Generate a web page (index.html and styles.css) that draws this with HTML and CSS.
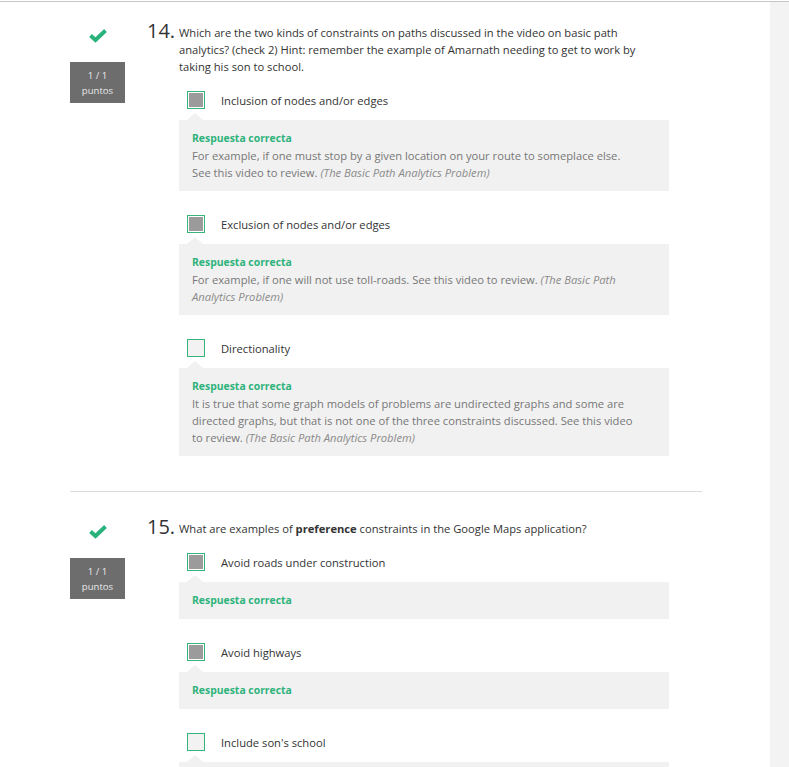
FILE: index.html
```html
<!DOCTYPE html>
<html lang="es">
<head>
<meta charset="utf-8">
<title>Quiz</title>
<link rel="stylesheet" href="styles.css">
</head>
<body>
<div class="page">
  <main class="main">
    <section class="question">
      <div class="gutter">
        <svg class="check" width="20" height="15" viewBox="0 0 20 15"><path d="M2.5 7.5 L7.5 12 L17.5 2.5" fill="none" stroke="#2ab27b" stroke-width="4" stroke-linecap="butt" stroke-linejoin="miter"/></svg>
        <div class="score"><span>1 / 1</span><span>puntos</span></div>
      </div>
      <div class="qbody">
        <div class="prompt"><span class="num">14.</span><p>Which are the two kinds of constraints on paths discussed in the video on basic path analytics? (check 2) Hint: remember the example of Amarnath needing to get to work by taking his son to school.</p></div>
        <ul class="options">
          <li class="option">
            <div class="choice"><span class="box checked"></span><span class="text">Inclusion of nodes and/or edges</span></div>
            <div class="feedback"><div class="label">Respuesta correcta</div><p>For example, if one must stop by a given location on your route to someplace else. See this video to review. <em>(The Basic Path Analytics Problem)</em></p></div>
          </li>
          <li class="option">
            <div class="choice"><span class="box checked"></span><span class="text">Exclusion of nodes and/or edges</span></div>
            <div class="feedback"><div class="label">Respuesta correcta</div><p>For example, if one will not use toll-roads. See this video to review. <em>(The Basic Path Analytics Problem)</em></p></div>
          </li>
          <li class="option">
            <div class="choice"><span class="box"></span><span class="text">Directionality</span></div>
            <div class="feedback"><div class="label">Respuesta correcta</div><p>It is true that some graph models of problems are undirected graphs and some are directed graphs, but that is not one of the three constraints discussed. See this video to review. <em>(The Basic Path Analytics Problem)</em></p></div>
          </li>
        </ul>
      </div>
    </section>
    <hr class="sep">
    <section class="question">
      <div class="gutter">
        <svg class="check" width="20" height="15" viewBox="0 0 20 15"><path d="M2.5 7.5 L7.5 12 L17.5 2.5" fill="none" stroke="#2ab27b" stroke-width="4" stroke-linecap="butt" stroke-linejoin="miter"/></svg>
        <div class="score"><span>1 / 1</span><span>puntos</span></div>
      </div>
      <div class="qbody">
        <div class="prompt"><span class="num">15.</span><p>What are examples of <strong>preference</strong> constraints in the Google Maps application?</p></div>
        <ul class="options">
          <li class="option">
            <div class="choice"><span class="box checked"></span><span class="text">Avoid roads under construction</span></div>
            <div class="feedback"><div class="label">Respuesta correcta</div></div>
          </li>
          <li class="option">
            <div class="choice"><span class="box checked"></span><span class="text">Avoid highways</span></div>
            <div class="feedback"><div class="label">Respuesta correcta</div></div>
          </li>
          <li class="option">
            <div class="choice"><span class="box"></span><span class="text">Include son's school</span></div>
            <div class="feedback"><div class="label">Respuesta correcta</div><p>This is not a preference constraint.</p></div>
          </li>
        </ul>
      </div>
    </section>
  </main>
  <aside class="sidebar"></aside>
</div>
</body>
</html>
```

FILE: styles.css
```css
html, body {
  margin: 0;
  padding: 0;
  background: #fff;
  overflow: hidden;
}
body {
  font-family: "Open Sans", "DejaVu Sans", sans-serif;
  color: #333;
}
.page {
  display: flex;
  margin-top: 1px;
  border-top: 1px solid #c6c6c6;
  height: 765px;
  overflow: hidden;
}
.main {
  width: 770px;
  flex: none;
  box-sizing: border-box;
  padding: 0 68px 0 70px;
}
.sidebar {
  flex: 1;
  background: #f3f3f3;
}
.question {
  display: flex;
  padding-top: 22px;
}
.gutter {
  width: 55px;
  flex: none;
  display: flex;
  flex-direction: column;
  align-items: center;
}
.check {
  margin-top: 4px;
  display: block;
}
.score {
  margin-top: 19px;
  width: 55px;
  height: 41px;
  background: #6d6d6d;
  color: #e8e8e8;
  font-size: 9.6px;
  line-height: 15px;
  display: flex;
  flex-direction: column;
  align-items: center;
  justify-content: center;
}
.qbody {
  margin-left: 22px;
  flex: 1;
}
.prompt {
  display: flex;
  align-items: flex-start;
}
.num {
  width: 32px;
  flex: none;
  font-size: 20px;
  line-height: 14px;
  color: #333;
}
.prompt p {
  margin: 0;
  width: 480px;
  font-size: 11.2px;
  line-height: 17px;
}
.prompt strong {
  font-weight: 700;
}
.options {
  list-style: none;
  margin: 16px 0 0 32px;
  padding: 0;
  width: 490px;
}
.option + .option {
  margin-top: 24px;
}
.choice {
  display: flex;
  align-items: center;
  height: 18px;
  padding-left: 8px;
}
.box {
  width: 18px;
  height: 18px;
  flex: none;
  box-sizing: border-box;
  border: 1px solid #35b47c;
  background: #f2f2f2;
}
.box.checked {
  padding: 1px;
  background-color: #9b9b9b;
  background-clip: content-box;
}
.text {
  margin-left: 16px;
  font-size: 11.2px;
  line-height: 17px;
  color: #333;
}
.feedback {
  position: relative;
  margin-top: 11px;
  background: #f1f1f1;
  padding: 10px 32px 10px 13px;
}
.feedback::before {
  content: "";
  position: absolute;
  left: 8px;
  top: -7px;
  border-left: 8px solid transparent;
  border-right: 8px solid transparent;
  border-bottom: 7px solid #f1f1f1;
}
.label {
  color: #2fb37c;
  font-weight: 700;
  font-size: 10.4px;
  line-height: 17px;
}
.feedback p {
  margin: 0;
  color: #777;
  font-size: 11.2px;
  line-height: 17px;
}
.feedback em {
  color: #8a8a8a;
}
.sep {
  margin: 35px 0 6px;
  border: 0;
  border-top: 1px solid #dcdcdc;
  height: 0;
}
```
